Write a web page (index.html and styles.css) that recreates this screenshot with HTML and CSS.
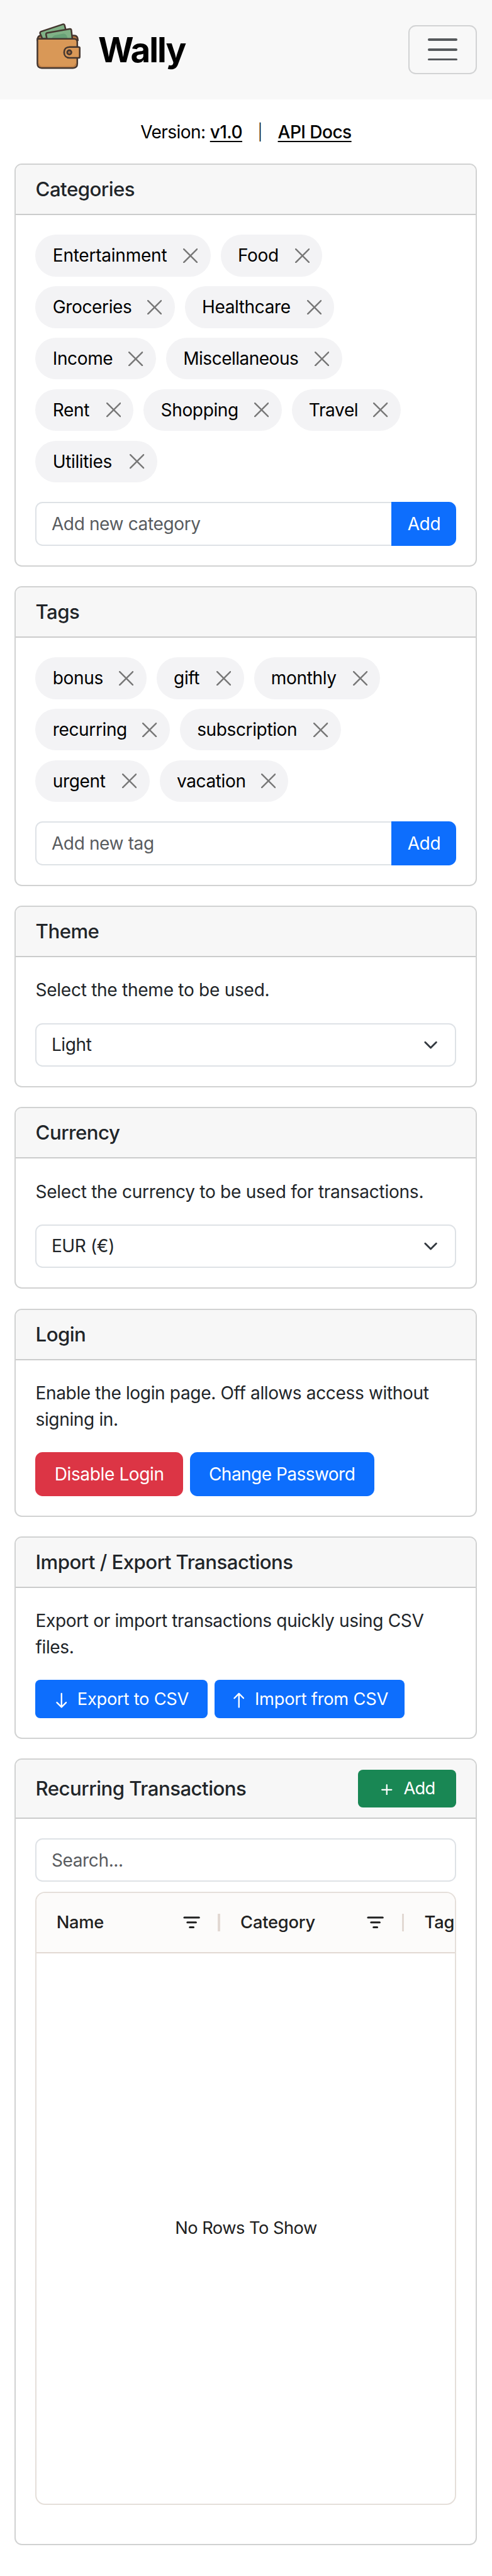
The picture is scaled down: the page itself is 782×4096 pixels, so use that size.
FILE: index.html
```
<!DOCTYPE html>
<html lang="en">
<head>
<meta charset="utf-8">
<title>Wally</title>
<link rel="stylesheet" href="styles.css">
</head>
<body>
<svg width="0" height="0" class="defs">
  <symbol id="x" viewBox="0 0 24 24"><path d="M1.2 1.2l21.6 21.6M22.8 1.2L1.2 22.8" fill="none" stroke="currentColor" stroke-width="2.5" stroke-linecap="round"/></symbol>
  <symbol id="chevron" viewBox="0 0 16 16"><path d="M2 5l6 6 6-6" fill="none" stroke="#343a40" stroke-width="2" stroke-linecap="round" stroke-linejoin="round"/></symbol>
  <symbol id="filter" viewBox="0 0 28 20"><path d="M2 2h24M7 10h14M11 18h6" fill="none" stroke="currentColor" stroke-width="3.1" stroke-linecap="round"/></symbol>
</svg>
<div class="page">
  <header class="navbar">
    <div class="brand">
      <svg class="logo" viewBox="0 0 72 75" fill="none" stroke="#44362f" stroke-width="2.6" stroke-linejoin="round" stroke-linecap="round">
        <path d="M1.5 28c0-5 2-8 6-8h54c4 0 6 3 6 8z" fill="#b97a45"/>
        <path d="M9.500 25L6 17c-.6-1.600 0-2.700 1.500-3.500L43 1.700c1.600-.5 2.500.2 2.900 1.800L50 20 30 26z" fill="#80b186"/>
        <path d="M17 26l-1.400-7.500c-.3-1.600.4-2.600 2-2.900l36.500-6.400c1.500-.2 2.500.5 2.700 2L58.500 26z" fill="#80b186"/>
        <path d="M25 25c1-4 4-5.500 8-6l11-2c3 0 6 2 6.500 8z" fill="#68a177" stroke="none"/>
        <path d="M1.500 25.500h60c3.500 0 5 2 5 5.500v35c0 4.500-2.500 7-7 7h-51c-4.500 0-7-2.500-7-7z" fill="#d99857"/>
        <path d="M4 66c0 3 1.500 4.600 4.500 4.600h50.500c3.200 0 5-1.600 5-4.600" stroke="#b97a45" stroke-width="1.4"/>
        <path d="M70.500 40v14.500c0 1.300-.7 2-2 2H54c-5.500 0-9-3.500-9-9s3.500-8.800 9-8.800h14.500c1.300 0 2 .5 2 1.300z" fill="#d99857"/>
        <circle cx="53.500" cy="47.500" r="3.500" fill="#a66e40"/>
      </svg>
      <span class="brand-name">Wally</span>
    </div>
    <button class="toggler"><span class="bar"></span><span class="bar"></span><span class="bar"></span></button>
  </header>

  <div class="version">
    <span class="ver-label">Version: <a class="link">v1.0</a></span><span class="divider">|</span><a class="link docs">API Docs</a>
  </div>

  <main class="cards">
    <section class="card">
      <div class="card-header">Categories</div>
      <div class="card-body">
        <div class="pills">
          <span class="pill entertainment">Entertainment<svg class="close"><use href="#x"/></svg></span>
          <span class="pill food">Food<svg class="close"><use href="#x"/></svg></span>
          <span class="pill groceries">Groceries<svg class="close"><use href="#x"/></svg></span>
          <span class="pill healthcare">Healthcare<svg class="close"><use href="#x"/></svg></span>
          <span class="pill income">Income<svg class="close"><use href="#x"/></svg></span>
          <span class="pill miscellaneous">Miscellaneous<svg class="close"><use href="#x"/></svg></span>
          <span class="pill rent">Rent<svg class="close"><use href="#x"/></svg></span>
          <span class="pill shopping">Shopping<svg class="close"><use href="#x"/></svg></span>
          <span class="pill travel">Travel<svg class="close"><use href="#x"/></svg></span>
          <span class="pill utilities">Utilities<svg class="close"><use href="#x"/></svg></span>
        </div>
        <div class="input-group"><div class="field placeholder">Add new category</div><button class="group-btn">Add</button></div>
      </div>
    </section>

    <section class="card">
      <div class="card-header">Tags</div>
      <div class="card-body">
        <div class="pills">
          <span class="pill bonus">bonus<svg class="close"><use href="#x"/></svg></span>
          <span class="pill gift">gift<svg class="close"><use href="#x"/></svg></span>
          <span class="pill monthly">monthly<svg class="close"><use href="#x"/></svg></span>
          <span class="pill recurring">recurring<svg class="close"><use href="#x"/></svg></span>
          <span class="pill subscription">subscription<svg class="close"><use href="#x"/></svg></span>
          <span class="pill urgent">urgent<svg class="close"><use href="#x"/></svg></span>
          <span class="pill vacation">vacation<svg class="close"><use href="#x"/></svg></span>
        </div>
        <div class="input-group"><div class="field placeholder">Add new tag</div><button class="group-btn">Add</button></div>
      </div>
    </section>

    <section class="card">
      <div class="card-header">Theme</div>
      <div class="card-body">
        <p class="text wide">Select the theme to be used.</p>
        <div class="field select"><span>Light</span><svg class="chevron"><use href="#chevron"/></svg></div>
      </div>
    </section>

    <section class="card">
      <div class="card-header">Currency</div>
      <div class="card-body">
        <p class="text wide">Select the currency to be used for transactions.</p>
        <div class="field select"><span>EUR (€)</span><svg class="chevron"><use href="#chevron"/></svg></div>
      </div>
    </section>

    <section class="card">
      <div class="card-header">Login</div>
      <div class="card-body">
        <p class="text">Enable the login page. Off allows access without<br>signing in.</p>
        <div class="buttons"><button class="btn danger">Disable Login</button><button class="btn primary">Change Password</button></div>
      </div>
    </section>

    <section class="card">
      <div class="card-header">Import / Export Transactions</div>
      <div class="card-body">
        <p class="text">Export or import transactions quickly using CSV<br>files.</p>
        <div class="buttons">
          <button class="btn-sm export"><svg class="arrow" viewBox="0 0 18 26"><path d="M9 2v21M1.500 16.500L9 24l7.500-7.500" fill="none" stroke="#fff" stroke-width="2.400" stroke-linecap="round" stroke-linejoin="round"/></svg>Export to CSV</button>
          <button class="btn-sm import"><svg class="arrow" viewBox="0 0 18 26"><path d="M9 24V3M1.500 9.500L9 2l7.500 7.500" fill="none" stroke="#fff" stroke-width="2.400" stroke-linecap="round" stroke-linejoin="round"/></svg>Import from CSV</button>
        </div>
      </div>
    </section>

    <section class="card recurring-card">
      <div class="card-header tall">Recurring Transactions
        <button class="btn-sm success"><svg class="plus" viewBox="0 0 18 18"><path d="M9 1.200v15.600M1.200 9h15.600" fill="none" stroke="#fff" stroke-width="2.300" stroke-linecap="round"/></svg>Add</button>
      </div>
      <div class="card-body">
        <div class="field placeholder">Search...</div>
        <div class="grid">
          <div class="grid-head">
            <div class="col">Name<svg class="filter"><use href="#filter"/></svg></div>
            <div class="col">Category<svg class="filter"><use href="#filter"/></svg></div>
            <div class="col last">Tag</div>
          </div>
          <div class="grid-body">No Rows To Show</div>
        </div>
      </div>
    </section>
  </main>
</div>
</body>
</html>
```
FILE: styles.css
```
* { box-sizing: border-box; }
html, body { margin: 0; background: #fff; }
body { height: 4096px; overflow: hidden; }
button { font: inherit; letter-spacing: inherit; margin: 0; padding: 0; border: 0; background: none; color: inherit; }
.defs { display: block; height: 0; }

.page {
  width: 802px;
  height: 4201px;
  zoom: 0.97483;
  font-family: Inter, "Liberation Sans", sans-serif;
  font-size: 28.8px;
  line-height: 43.2px;
  letter-spacing: -0.014em;
  color: #212529;
}

.navbar {
  height: 162px;
  padding: 0 24px 0 60px;
  display: flex;
  align-items: center;
  justify-content: space-between;
  background: #f8f8f8;
}
.brand { display: flex; align-items: center; }
.logo { width: 72px; height: 75px; margin: 0 28px 12px 0; }
.brand-name { font-size: 56px; font-weight: 700; letter-spacing: -0.036em; color: #000; line-height: 80px; padding-top: 3px; }
.toggler {
  width: 112px;
  height: 80px;
  border: 2.1px solid #d2d3d4;
  border-radius: 12px;
  display: flex;
  flex-direction: column;
  align-items: center;
  justify-content: center;
  gap: 12px;
}
.bar { width: 48px; height: 4px; border-radius: 2px; background: #56595c; }

.version { height: 105px; padding-top: 1px; display: flex; justify-content: center; align-items: center; color: #000; }
.ver-label { letter-spacing: -0.021em; }
.link { font-weight: 500; text-decoration: underline; text-decoration-thickness: 2.1px; text-underline-offset: 4px; }
.docs { letter-spacing: -0.02em; }
.divider { width: 58px; text-align: center; font-size: 26px; font-weight: 300; }

.cards { display: flex; flex-direction: column; gap: 32px; padding: 0 24px; }
.card { border: 2.1px solid #d1d2d2; border-radius: 12px; overflow: hidden; background: #fff; }
.card-header {
  height: 82px;
  padding: 0 32px;
  display: flex;
  align-items: center;
  justify-content: space-between;
  background: #f7f7f7;
  border-bottom: 2.1px solid #cbcccc;
  font-size: 32px;
  font-weight: 500;
  letter-spacing: -0.017em;
}
.card-header.tall { height: 96px; }
.card-body { padding: 32px 31.900px; }
.text { margin: 0 0 32px; letter-spacing: -0.013em; white-space: nowrap; }
.text.wide { letter-spacing: -0.010em; }

.pills { display: flex; flex-wrap: wrap; row-gap: 16px; }
.pill {
  height: 68px;
  margin-right: 16.300px;
  padding: 0 21px 0 28px;
  border-radius: 34px;
  display: flex;
  align-items: center;
  justify-content: space-between;
  background: #f3f3f5;
  color: #000;
  white-space: nowrap;
}
.close { width: 24px; height: 24px; flex: none; color: #777; }
.entertainment { width: 285.500px; letter-spacing: -0.009em; }
.food { width: 166px; }
.groceries { width: 227px; }
.healthcare { width: 244px; }
.income { width: 196.600px; }
.miscellaneous { width: 287px; letter-spacing: -0.019em; }
.rent { width: 160px; }
.shopping { width: 225px; }
.travel { width: 178px; }
.utilities { width: 198.700px; }
.bonus { width: 181px; }
.gift { width: 142.500px; }
.monthly { width: 206px; }
.recurring { width: 219px; }
.subscription { width: 263px; }
.urgent { width: 186px; }
.vacation { width: 210px; }

.input-group { display: flex; margin-top: 32px; }
.field {
  height: 71.200px;
  flex: 1;
  padding: 0 24px;
  display: flex;
  align-items: center;
  border: 2.1px solid #dee2e6;
  border-radius: 12px;
}
.placeholder { color: #595c5f; }
.input-group .field { border-right: 0; border-radius: 12px 0 0 12px; }
.group-btn { width: 105.500px; background: #0d6efd; color: #fff; border-radius: 0 12px 12px 0; }
.select { justify-content: space-between; }
.chevron { width: 32px; height: 32px; padding: 4px; overflow: visible; }

.buttons { display: flex; gap: 11px; }
.btn { height: 71.200px; border-radius: 12px; color: #fff; }
.danger { width: 240.500px; background: #dc3545; }
.primary { width: 300.500px; background: #0d6efd; letter-spacing: -0.02em; }
.btn-sm {
  height: 62px;
  border-radius: 8px;
  display: flex;
  align-items: center;
  color: #fff;
  font-size: 28px;
  font-weight: 400;
  letter-spacing: -0.009em;
}
.export { width: 280.500px; padding-left: 33px; background: #0d6efd; }
.import { width: 310px; padding-left: 31px; background: #0d6efd; }
.arrow { width: 18px; height: 26px; margin: 4px 17px 0 0; }
.success { width: 160px; padding-left: 38px; background: #198754; letter-spacing: -0.025em; }
.plus { width: 18px; height: 18px; margin: 3px 18px 0 0; }

.grid {
  height: 1000px;
  margin: 16px 0 32px;
  border: 2.1px solid #e5dfda;
  border-radius: 16px;
  overflow: hidden;
  display: flex;
  flex-direction: column;
  color: #212121;
}
.grid-head { height: 98px; flex: none; display: flex; background: #fcfbfa; border-bottom: 2.1px solid #e2d9d3; font-size: 28px; font-weight: 500; letter-spacing: -0.008em; }
.col { position: relative; width: 300px; flex: none; padding: 0 34px 0 32px; display: flex; align-items: center; justify-content: space-between; }
.col:not(.last)::after { content: ""; position: absolute; right: 1px; top: 34px; width: 4px; height: 29px; background: #e2d9d3; }
.filter { width: 28px; height: 20px; }
.grid-body { flex: 1; display: flex; align-items: center; justify-content: center; font-size: 28px; letter-spacing: -0.019em; }
```
